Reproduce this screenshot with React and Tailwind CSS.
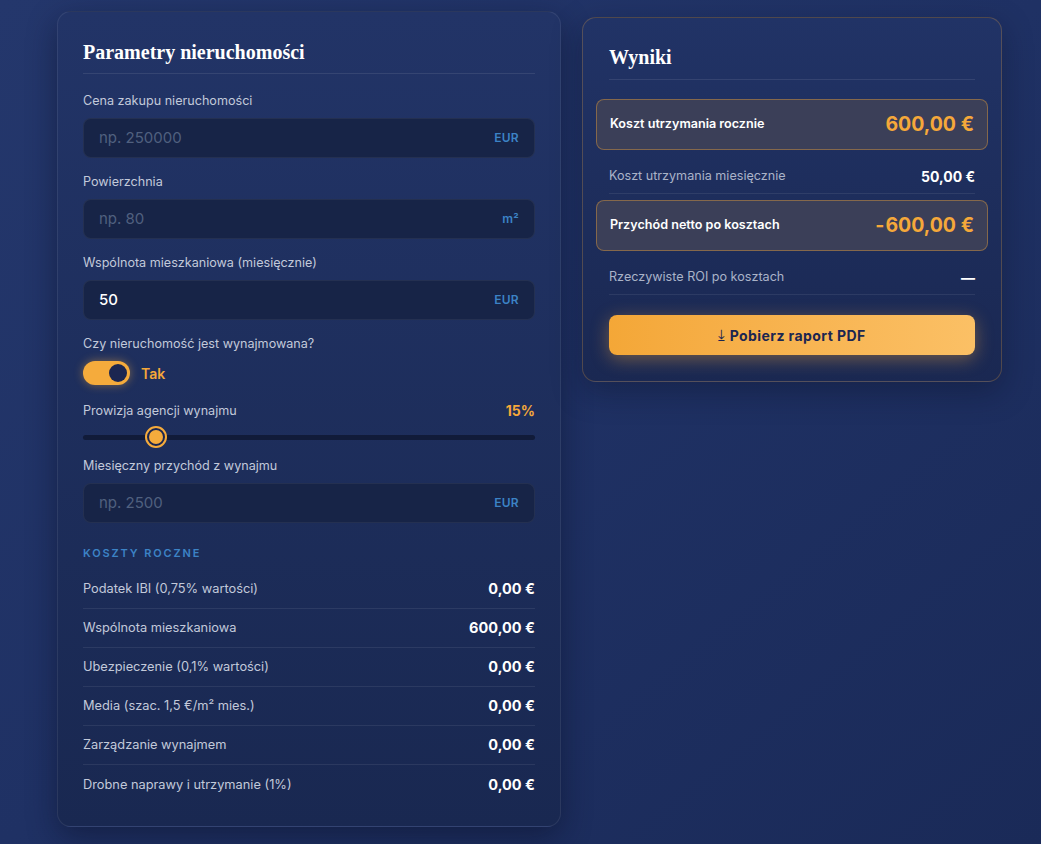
import React, { useState } from "react";

const body = { fontFamily: "Inter, 'Noto Sans', sans-serif" };
const serif = { fontFamily: "'Liberation Serif', 'DejaVu Serif', serif" };

const costs = [
  { label: "Podatek IBI (0,75% wartości)", value: "0,00 €" },
  { label: "Wspólnota mieszkaniowa", value: "600,00 €" },
  { label: "Ubezpieczenie (0,1% wartości)", value: "0,00 €" },
  { label: "Media (szac. 1,5 €/m² mies.)", value: "0,00 €" },
  { label: "Zarządzanie wynajmem", value: "0,00 €" },
  { label: "Drobne naprawy i utrzymanie (1%)", value: "0,00 €" },
];

const Field = ({ label, placeholder, value, suffix, className = "" }) => (
  <div className={className}>
    <label className="block text-[12.6px] leading-4 text-[#c2c9da]">{label}</label>
    <div className="mt-[9px] flex h-10 items-center rounded-lg border border-white/[0.06] bg-[#172447] px-[15px]">
      <input
        defaultValue={value}
        placeholder={placeholder}
        className="min-w-0 flex-1 bg-transparent text-[15px] font-medium text-white outline-none placeholder:font-normal placeholder:text-[#50607f]"
      />
      <span className="text-[12px] font-semibold tracking-wide text-[#3c83c6]">{suffix}</span>
    </div>
  </div>
);

const App = () => {
  const [rented, setRented] = useState(true);

  return (
    <div
      style={body}
      className="min-h-screen bg-gradient-to-br from-[#24376c] via-[#1f3164] to-[#1a2a58] pl-[57px] pt-[11px] pb-4"
    >
      <div className="flex items-start gap-[21px]">
        {/* Parameters */}
        <section className="w-[504px] rounded-[14px] border border-white/[0.08] bg-gradient-to-b from-[#223467] to-[#192851] px-[25px] pt-[27px] pb-[22px] shadow-[0_10px_30px_rgba(8,14,35,0.45)]">
          <h2 style={serif} className="border-b border-white/[0.09] pb-[8px] text-[20px] font-bold leading-[26px] text-white">
            Parametry nieruchomości
          </h2>

          <Field className="mt-[19px]" label="Cena zakupu nieruchomości" placeholder="np. 250000" suffix="EUR" />
          <Field className="mt-4" label="Powierzchnia" placeholder="np. 80" suffix="m²" />
          <Field className="mt-4" label="Wspólnota mieszkaniowa (miesięcznie)" value="50" suffix="EUR" />

          <div className="mt-[16px]">
            <span className="block text-[12.6px] leading-4 text-[#c2c9da]">Czy nieruchomość jest wynajmowana?</span>
            <div className="mt-[9px] flex items-center gap-[11px]">
              <button
                onClick={() => setRented(!rented)}
                className="flex h-6 w-[47px] items-center justify-end rounded-full bg-[#f5ab3c] px-[3px] shadow-[0_0_10px_rgba(245,171,60,0.45)]"
              >
                <span className="h-[18px] w-[18px] rounded-full bg-[#1b2651]" />
              </button>
              <span className="text-[14px] font-semibold text-[#f5a83a]">{rented ? "Tak" : "Nie"}</span>
            </div>
          </div>

          <div className="mt-[15px]">
            <div className="flex items-center justify-between">
              <span className="text-[12.6px] leading-4 text-[#c2c9da]">Prowizja agencji wynajmu</span>
              <span className="text-[14px] font-bold text-[#f5a83a]">15%</span>
            </div>
            <div className="relative mt-[5px] flex h-[22px] items-center">
              <div className="h-[5px] w-full rounded-full bg-[#111b39]" />
              <span className="absolute left-[62px] h-[22px] w-[22px] rounded-full border-2 border-[#f5ab3c] bg-[#1b2651] p-[2px]">
                <span className="block h-full w-full rounded-full bg-[#f5ab3c]" />
              </span>
            </div>
          </div>

          <Field className="mt-[10px]" label="Miesięczny przychód z wynajmu" placeholder="np. 2500" suffix="EUR" />

          <h3 className="mt-[23px] text-[11px] font-semibold leading-[14px] tracking-[0.17em] text-[#3c83c6]">
            KOSZTY ROCZNE
          </h3>
          <ul className="mt-[10px]">
            {costs.map((c, i) => (
              <li
                key={c.label}
                className={`flex h-[39px] items-center justify-between ${i < costs.length - 1 ? "border-b border-white/[0.08]" : ""}`}
              >
                <span className="text-[12.8px] text-[#c2c9da]">{c.label}</span>
                <span className="text-[14.5px] font-bold text-white">{c.value}</span>
              </li>
            ))}
          </ul>
        </section>

        {/* Results */}
        <section className="mt-[6px] w-[420px] rounded-[14px] border border-[#f5a83a]/25 bg-gradient-to-b from-[#213366] to-[#1a2852] px-[26px] pt-[26px] pb-[26px] shadow-[0_10px_30px_rgba(8,14,35,0.35)]">
          <h2 style={serif} className="border-b border-white/[0.09] pb-[9px] text-[20px] font-bold leading-[26px] text-white">
            Wyniki
          </h2>

          <div className="-mx-[13px] mt-[19px] flex h-[51px] items-center justify-between rounded-lg border border-[#f5a83a]/40 bg-[#3b3f58] px-[13px]">
            <span className="text-[12.6px] font-semibold text-white">Koszt utrzymania rocznie</span>
            <span className="text-[19.5px] font-bold text-[#f5a83a]">600,00 €</span>
          </div>
          <div className="mt-[6px] flex h-[38px] items-center justify-between border-b border-white/[0.08] pt-[3px]">
            <span className="text-[12.6px] text-[#aab3c8]">Koszt utrzymania miesięcznie</span>
            <span className="text-[14px] font-bold text-white">50,00 €</span>
          </div>
          <div className="-mx-[13px] mt-[6px] flex h-[51px] items-center justify-between rounded-lg border border-[#f5a83a]/40 bg-[#3b3f58] px-[13px]">
            <span className="text-[12.6px] font-semibold text-white">Przychód netto po kosztach</span>
            <span className="text-[19.5px] font-bold text-[#f5a83a]">
              <span className="mr-[1px]">-</span>600,00 €
            </span>
          </div>
          <div className="mt-[6px] flex h-[38px] items-center justify-between border-b border-white/[0.08] pt-[3px]">
            <span className="text-[12.6px] text-[#aab3c8]">Rzeczywiste ROI po kosztach</span>
            <span className="text-[14px] font-bold text-white">—</span>
          </div>

          <button className="mt-[20px] flex h-10 w-full items-center justify-center gap-[4px] rounded-lg bg-gradient-to-r from-[#f4a737] to-[#fbc065] text-[14px] font-bold tracking-[0.03em] text-[#1b2651] shadow-[0_4px_18px_rgba(245,168,58,0.4)]">
            <span style={{ fontFamily: "'DejaVu Sans', sans-serif" }} className="text-[15px] font-normal leading-none">⤓</span>
            Pobierz raport PDF
          </button>
        </section>
      </div>
    </div>
  );
};

export default App;
